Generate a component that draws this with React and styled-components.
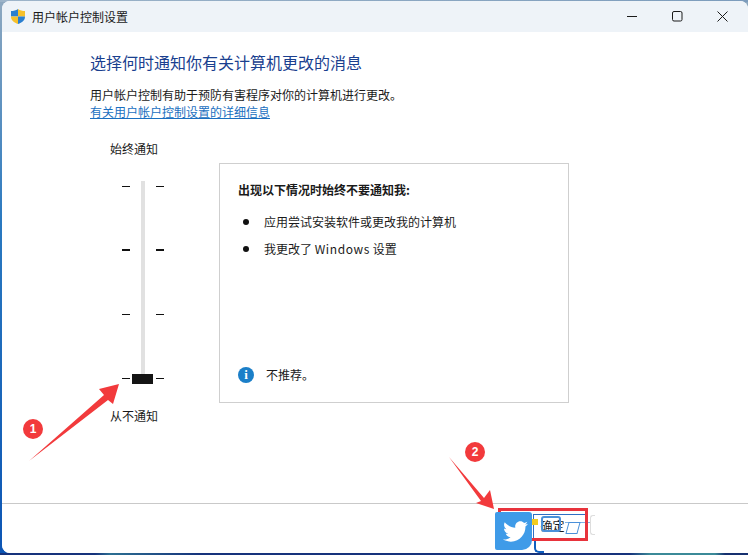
import styled, { createGlobalStyle } from 'styled-components'
import { FaTwitter } from 'react-icons/fa'

const cjk = '"Noto Sans CJK SC", "Noto Sans", sans-serif'

const GlobalStyle = createGlobalStyle`
	html, body {
		margin: 0;
		padding: 0;
		background: #0f5fa8;
	}
	* {
		box-sizing: border-box;
	}
`

const levels = [
	{ strong: false },
	{ strong: true },
	{ strong: false },
	{ strong: false, current: true },
]

function Shield() {
	return (
		<svg width="14" height="15" viewBox="0 0 14 15">
			<path d="M7 0C5 1.500 2.500 2 0 2v5.500h7z" fill="#2a7fd0" />
			<path d="M7 0c2 1.500 4.500 2 7 2v5.500H7z" fill="#f5c02c" />
			<path d="M0 7.500h7V15C3 13.500 0 11.500 0 7.500z" fill="#f5c02c" />
			<path d="M7 7.500h7c0 4-3 6-7 7.500z" fill="#2a7fd0" />
		</svg>
	)
}

function WindowIcon({ type }) {
	return (
		<svg width="11" height="11" viewBox="0 0 11 11" fill="none" stroke="#1a1a1a" strokeWidth="1">
			{type === 'min' && <path d="M0 5.500h10" />}
			{type === 'max' && <rect x=".5" y=".5" width="9.500" height="9.500" rx="1.500" />}
			{type === 'close' && <path d="M.5 .5l10 10M10.500 .5l-10 10" />}
		</svg>
	)
}

function Arrow({ points, top, left, width, height }) {
	return (
		<ArrowSvg $top={top} $left={left} width={width} height={height} viewBox={`0 0 ${width} ${height}`}>
			<polygon points={points} fill="#f23a3c" />
		</ArrowSvg>
	)
}

export default function App() {
	return (
		<Page>
			<GlobalStyle />
			<Window>
				<TitleBar>
					<TitleLeft>
						<Shield />
						<TitleText>用户帐户控制设置</TitleText>
					</TitleLeft>
					<WindowButtons>
						<WindowIcon type="min" />
						<WindowIcon type="max" />
						<WindowIcon type="close" />
					</WindowButtons>
				</TitleBar>
				<Content>
					<Heading>选择何时通知你有关计算机更改的消息</Heading>
					<Description>用户帐户控制有助于预防有害程序对你的计算机进行更改。</Description>
					<HelpLink>有关用户帐户控制设置的详细信息</HelpLink>
					<Settings>
						<SliderColumn>
							<SliderLabel>始终通知</SliderLabel>
							<SliderBody>
								<Track />
								{levels.map((level, index) => (
									<TickRow key={index}>
										<Tick $strong={level.strong} />
										{level.current ? <Thumb /> : <ThumbGap />}
										<Tick $strong={level.strong} />
									</TickRow>
								))}
							</SliderBody>
							<SliderLabel>从不通知</SliderLabel>
						</SliderColumn>
						<InfoPanel>
							<div>
								<PanelTitle>出现以下情况时始终不要通知我:</PanelTitle>
								<BulletList>
									<li>应用尝试安装软件或更改我的计算机</li>
									<li>
										我更改了 <LatinWord>Windows</LatinWord> 设置
									</li>
								</BulletList>
							</div>
							<Advice>
								<InfoIcon>i</InfoIcon>
								<span>不推荐。</span>
							</Advice>
						</InfoPanel>
					</Settings>
				</Content>
				<Footer>
					<OkButton>确定</OkButton>
					<CancelStub />
				</Footer>
			</Window>

			<Arrow width={100} height={85} top={380} left={26} points="3,81 78,15 73,9 93,4 87,24 82,20" />
			<Badge $top={419} $left={23}>1</Badge>
			<Arrow width={60} height={60} top={455} left={447} points="2,2 37,43 43,35 47,54 29,48 34,46" />
			<Badge $top={442} $left={465}>2</Badge>
			<Overlay>
				<ButtonFrame />
				<FocusLine />
				<Outline />
				<Skew />
				<CornerLine />
			</Overlay>
			<Highlight />
			<Overlay>
				<Sticker>
					<FaTwitter size={25} color="#ffffff" />
				</Sticker>
				<Dot />
			</Overlay>
		</Page>
	)
}

const Page = styled.div`
	position: relative;
	width: 748px;
	height: 555px;
	overflow: hidden;
	padding-top: 1px;
	background:
		linear-gradient(90deg, #16337c 0, #16337c 95px, #2c6f92 110px, #16337c 200px, #16337c 630px, #3b8a98 650px, #3b8a98 715px, #16306f 725px) 0 100% / 100% 2px no-repeat,
		linear-gradient(90deg, #9db4c9, #7c9cbc) 0 0 / 100% 2px no-repeat,
		linear-gradient(180deg, #8fa9c0 0, #2a79c0 40%, #0c55b4 100%);
	font-family: ${cjk};
	color: #1a1a1a;
`
const Window = styled.div`
	width: 746px;
	height: 552px;
	margin-left: 2px;
	display: flex;
	flex-direction: column;
	background: #ffffff;
	border-radius: 8px 8px 0 8px;
	overflow: hidden;
`
const TitleBar = styled.div`
	flex: 0 0 31px;
	display: flex;
	align-items: center;
	justify-content: space-between;
	padding: 0 0 0 9px;
	background: #eef3f8;
`
const TitleLeft = styled.div`
	display: flex;
	align-items: center;
	gap: 7px;
	padding-bottom: 1px;
`
const TitleText = styled.span`
	font-size: 12px;
`
const WindowButtons = styled.div`
	display: flex;
	align-items: center;
	gap: 34px;
	padding-right: 20px;
`
const Content = styled.div`
	flex: 1;
	padding: 20px 0 0 88px;
	display: flex;
	flex-direction: column;
`
const Heading = styled.h1`
	margin: 0;
	font-size: 16px;
	line-height: 21px;
	font-weight: 400;
	color: #1a3f8f;
`
const Description = styled.p`
	margin: 13px 0 0;
	font-size: 12px;
	line-height: 17px;
`
const HelpLink = styled.a`
	font-size: 12px;
	line-height: 17px;
	color: #1a6fc0;
	text-decoration: underline;
`
const Settings = styled.div`
	display: flex;
	margin-top: 20px;
	margin-left: 20px;
`
const SliderColumn = styled.div`
	width: 48px;
	display: flex;
	flex-direction: column;
	align-items: flex-start;
`
const SliderLabel = styled.div`
	font-size: 12px;
	line-height: 17px;
	white-space: nowrap;
`
const SliderBody = styled.div`
	position: relative;
	width: 54px;
	height: 198px;
	margin: 24px 0 28px;
	padding-top: 4px;
	display: flex;
	flex-direction: column;
	gap: 62px;
`
const Track = styled.div`
	position: absolute;
	top: 0;
	bottom: 0;
	left: 31px;
	width: 4px;
	background: #e1e1e1;
`
const TickRow = styled.div`
	position: relative;
	display: flex;
	align-items: center;
	height: 2px;
	padding-left: 12px;
`
const Tick = styled.div`
	width: 8px;
	height: ${(p) => (p.$strong ? '2px' : '1px')};
	background: #111111;
`
const Thumb = styled.div`
	width: 21px;
	height: 10px;
	margin: 2px 3px 0 2px;
	background: #141414;
`
const ThumbGap = styled.div`
	width: 21px;
	margin: 0 3px 0 2px;
`
const InfoPanel = styled.div`
	width: 350px;
	height: 240px;
	margin: 23px 0 0 61px;
	padding: 17px 18px 19px;
	display: flex;
	flex-direction: column;
	justify-content: space-between;
	border: 1px solid #cfcfcf;
	background: #ffffff;
`
const PanelTitle = styled.div`
	font-size: 12px;
	line-height: 17px;
	font-weight: 700;
`
const BulletList = styled.ul`
	margin: 15px 0 0;
	padding: 0 0 0 26px;
	list-style: none;
	li {
		position: relative;
		font-size: 12px;
		line-height: 17px;
		margin-bottom: 10px;
	}
	li::before {
		content: '';
		position: absolute;
		left: -21px;
		top: 6px;
		width: 6px;
		height: 6px;
		border-radius: 50%;
		background: #111111;
	}
`
const LatinWord = styled.span`
	letter-spacing: 0.6px;
`
const Advice = styled.div`
	display: flex;
	align-items: center;
	gap: 12px;
	font-size: 12px;
`
const InfoIcon = styled.div`
	width: 16px;
	height: 16px;
	border-radius: 50%;
	background: #1b7fc8;
	color: #ffffff;
	font: 700 13px/16px 'Liberation Serif', serif;
	text-align: center;
`
const Footer = styled.div`
	flex: 0 0 50px;
	display: flex;
	justify-content: flex-end;
	align-items: flex-start;
	gap: 18px;
	padding: 11px 153px 0 0;
	border-top: 1px solid #c9c9c9;
	background: #ffffff;
`
const OkButton = styled.button`
	width: 39px;
	height: 22px;
	padding: 0;
	border: 0;
	background: transparent;
	font-family: ${cjk};
	font-size: 12px;
	line-height: 22px;
	color: #1a1a1a;
`
const CancelStub = styled.div`
	width: 5px;
	height: 20px;
	border: 1px solid #dddddd;
	border-right: 0;
	border-radius: 3px 0 0 3px;
`
const ArrowSvg = styled.svg`
	position: absolute;
	top: ${(p) => p.$top}px;
	left: ${(p) => p.$left}px;
`
const Badge = styled.div`
	position: absolute;
	top: ${(p) => p.$top}px;
	left: ${(p) => p.$left}px;
	width: 20px;
	height: 20px;
	border-radius: 50%;
	background: #f23a3c;
	color: #ffffff;
	font: 700 12px/20px 'Liberation Sans', sans-serif;
	text-align: center;
`
const Highlight = styled.div`
	position: absolute;
	left: 498px;
	top: 508px;
	width: 90px;
	height: 33px;
	border: 3px solid #e8333c;
`
const Overlay = styled.div`
	position: absolute;
	left: 495px;
	top: 512px;
	width: 100px;
	height: 43px;
`
const Sticker = styled.div`
	position: absolute;
	left: 0;
	top: 0;
	width: 37px;
	height: 38px;
	padding-left: 3px;
	display: flex;
	align-items: center;
	justify-content: center;
	background: #3f9be8;
	border-radius: 2px 3px 10px 2px;
`
const Dot = styled.div`
	position: absolute;
	left: 37px;
	top: 7px;
	width: 6px;
	height: 6px;
	background: #f2cc1f;
`
const ButtonFrame = styled.div`
	position: absolute;
	left: 38px;
	top: 2px;
	width: 53px;
	height: 27px;
	border: 1px solid #2f6fc4;
`
const FocusLine = styled.div`
	position: absolute;
	left: 70px;
	top: 10px;
	width: 25px;
	height: 1px;
	background: #7fb2e6;
`
const Outline = styled.div`
	position: absolute;
	left: 46px;
	top: 4px;
	width: 20px;
	height: 16px;
	border: 2px solid #4a90d9;
	border-radius: 3px;
`
const Skew = styled.div`
	position: absolute;
	left: 72px;
	top: 10px;
	width: 12px;
	height: 12px;
	border: 1px solid #4a90d9;
	transform: skewX(-15deg);
`
const CornerLine = styled.div`
	position: absolute;
	left: 39px;
	top: 29px;
	width: 10px;
	height: 12px;
	border-left: 2px solid #0f5fc0;
	border-bottom: 2px solid #0f5fc0;
	border-radius: 0 0 0 5px;
`
